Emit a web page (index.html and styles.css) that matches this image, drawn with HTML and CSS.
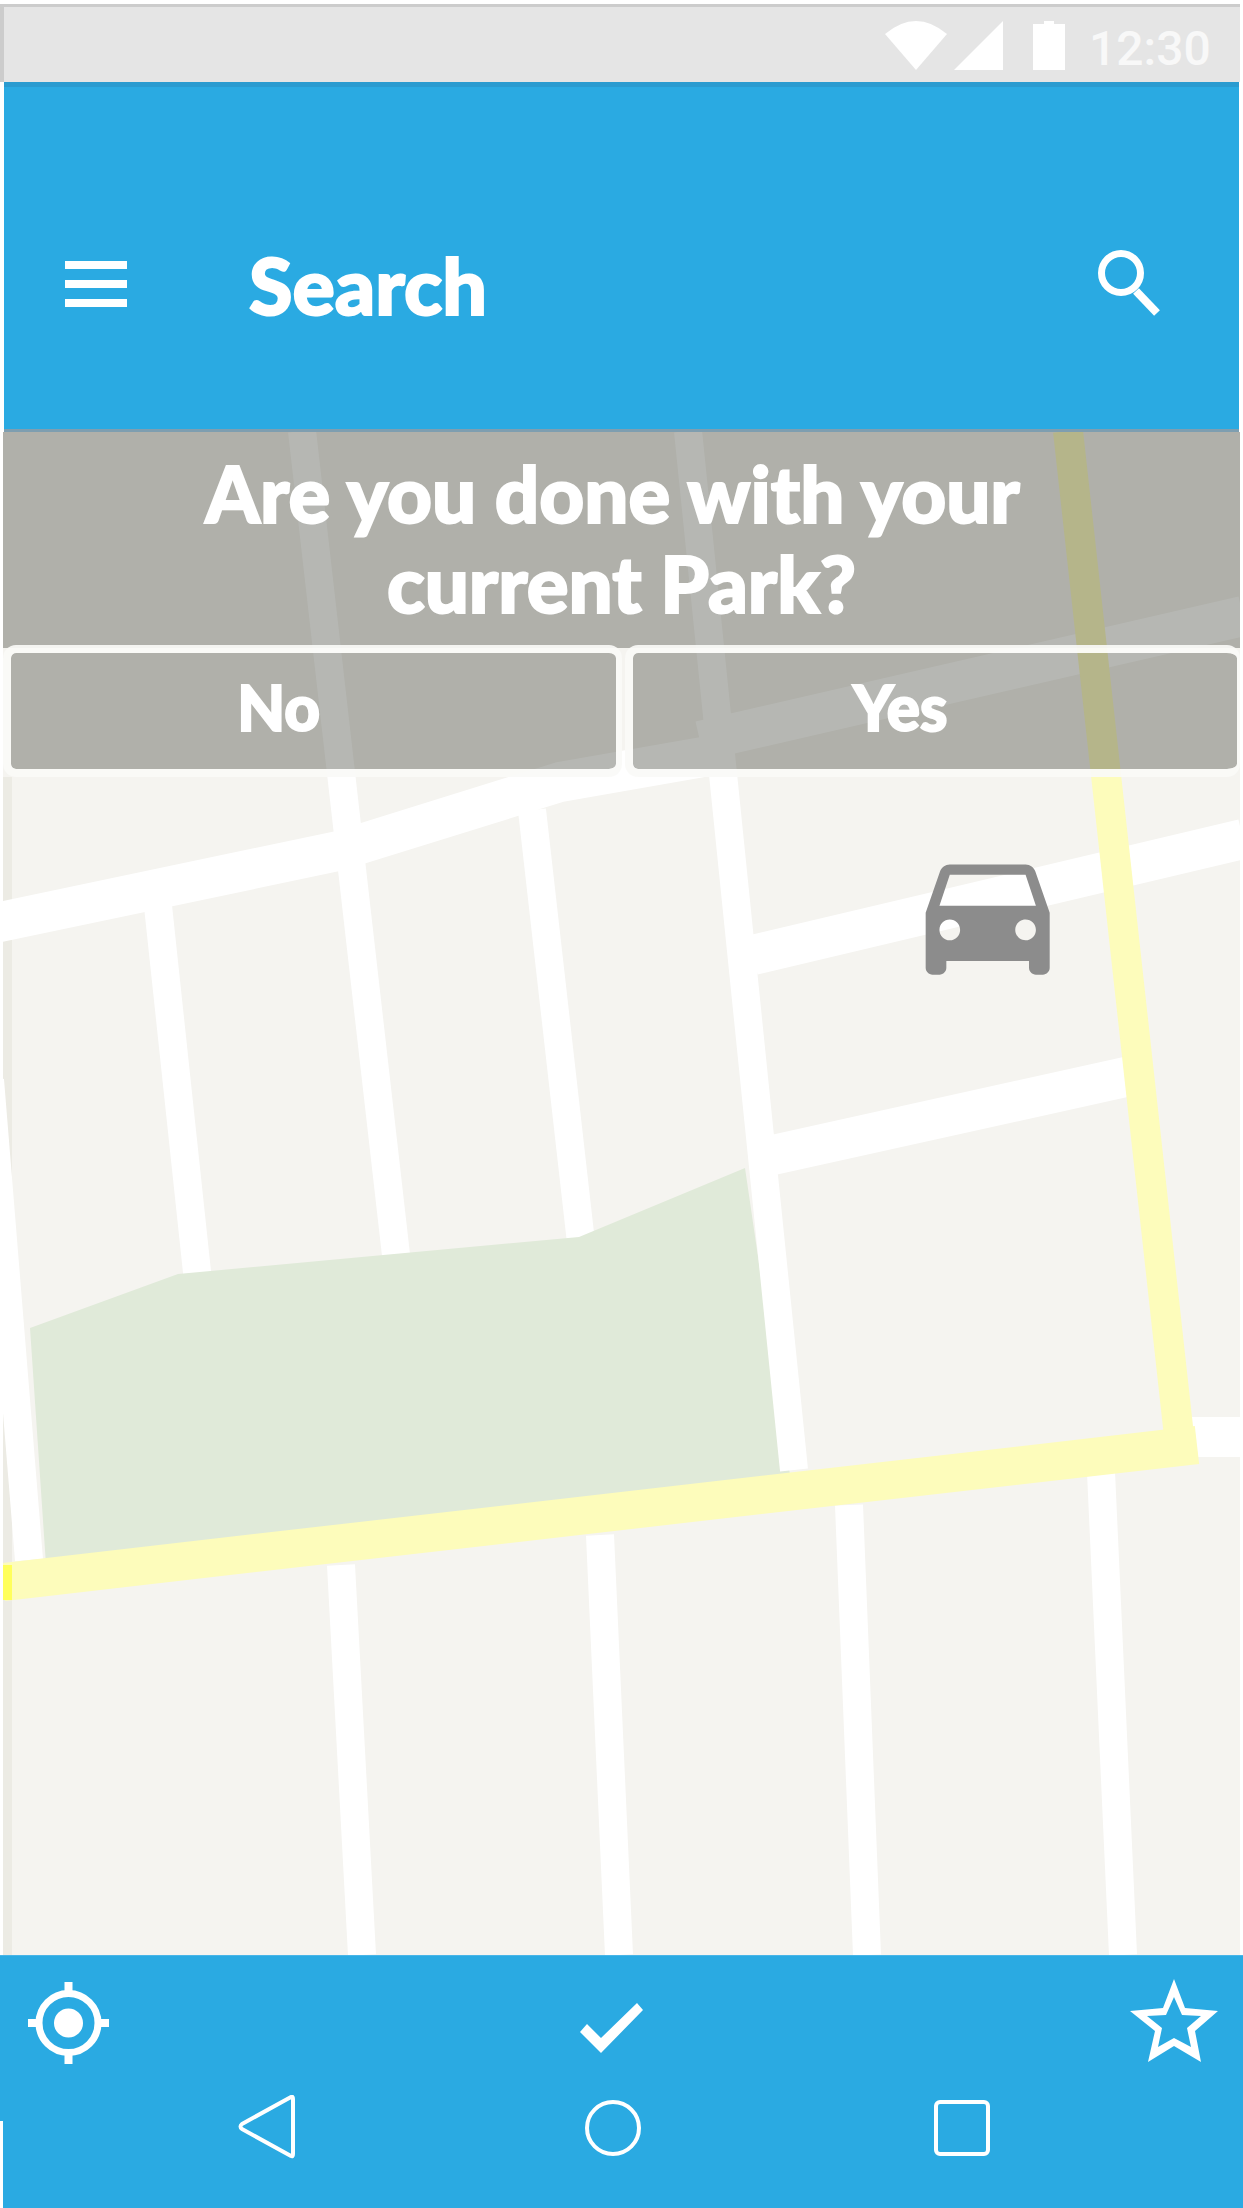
FILE: index.html
```html
<!DOCTYPE html>
<html lang="en">
<head>
<meta charset="utf-8">
<title>Search</title>
<link rel="stylesheet" href="styles.css">
</head>
<body>
<div class="screen">
  <div class="status">
    <svg class="status-icons" viewBox="885 21 180 49" width="180" height="49">
      <path class="fill-white" d="M885 34 Q916 8 947 34 L916 70 Z"/>
      <path class="fill-white" d="M954 70 L1003 21 V70 Z"/>
      <path class="fill-white" d="M1033 24 H1044 V21 H1054 V24 H1065 V70 H1033 Z"/>
    </svg>
    <span class="clock">12:30</span>
  </div>
  <header class="appbar">
    <div class="menu"><i></i><i></i><i></i></div>
    <h1 class="title">Search</h1>
    <svg class="search" viewBox="1098 248 64 70" width="64" height="70">
      <circle class="stroke-white search-ring" cx="1122" cy="273" r="19.5"/>
      <path class="stroke-white search-handle" d="M1137 291 L1158 313"/>
    </svg>
  </header>
  <main class="main">
    <svg class="map" viewBox="3 432 1237 1523" width="1237" height="1523">
      <rect class="strip" x="3" y="777" width="9" height="1178"/>
      <g class="road">
        <line x1="302" y1="431" x2="400" y2="1290"/>
        <line x1="158" y1="906" x2="200" y2="1300"/>
        <line x1="532" y1="810" x2="583" y2="1260"/>
      </g>
      <polygon class="park" points="30,1328 178,1274 579,1237 745,1168 790,1475 46,1565"/>
      <g class="road">
        <line x1="-10" y1="1080" x2="29" y2="1560"/>
        <line x1="688" y1="431" x2="794" y2="1470"/>
        <line x1="341" y1="1565" x2="362" y2="1955"/>
        <line x1="600" y1="1535" x2="619" y2="1955"/>
        <line x1="849" y1="1505" x2="867" y2="1955"/>
        <line x1="1101" y1="1472" x2="1123" y2="1955"/>
      </g>
      <g class="road-wide">
        <polyline points="-5,923 338,851 560,782 720,754"/>
        <polyline points="700,741 1243,616"/>
        <polyline points="753,955 1243,839"/>
        <polyline points="773,1155 1130,1076"/>
        <polyline points="1190,1437 1243,1437"/>
      </g>
      <g class="highway">
        <line x1="1068" y1="431" x2="1180" y2="1445"/>
        <line x1="3" y1="1582" x2="1197" y2="1445"/>
      </g>
      <rect class="stub" x="3" y="1565" width="9" height="35"/>
      <path class="car" transform="translate(905 830) scale(6.89)" d="M18.92 6.01C18.72 5.42 18.16 5 17.5 5h-11c-.66 0-1.21.42-1.42 1.01L3 12v8c0 .55.45 1 1 1h1c.55 0 1-.45 1-1v-1h12v1c0 .55.45 1 1 1h1c.55 0 1-.45 1-1v-8l-2.08-5.99zM6.5 16c-.83 0-1.5-.67-1.5-1.5S5.67 13 6.5 13s1.5.67 1.5 1.5S7.33 16 6.5 16zm11 0c-.83 0-1.5-.67-1.5-1.5s.67-1.5 1.5-1.5 1.5.67 1.5 1.5-.67 1.5-1.5 1.5zM5 11l1.5-4.5h11L19 11H5z"/>
    </svg>
    <section class="dialog">
      <h2 class="prompt"><span class="prompt-first">Are you done with your</span>current Park?</h2>
      <div class="choices">
        <button class="choice">No</button>
        <button class="choice choice-yes">Yes</button>
      </div>
    </section>
  </main>
  <footer class="bottom">
    <div class="actions">
      <svg class="locate" viewBox="28 1975 81 90" width="81" height="90">
        <circle class="stroke-white ring" cx="68.5" cy="2023" r="29.5"/>
        <circle class="fill-white" cx="68.5" cy="2023" r="14.5"/>
        <path class="stroke-white ticks" d="M68.5 1982V1994M68.5 2052V2064M28 2023H40M97 2023H109"/>
      </svg>
      <svg class="check" viewBox="580 1975 63 90" width="63" height="90">
        <polygon class="fill-white" points="580,2032 587,2024 601,2038 637,2003 643,2010 601,2053"/>
      </svg>
      <svg class="star" viewBox="1130 1975 88 90" width="88" height="90">
        <path class="fill-white" fill-rule="evenodd" d="M1174 1979L1185 2008L1218 2011L1195 2031L1201 2062L1174 2046L1148 2062L1155 2031L1130 2011L1163 2008ZM1174 1997L1166 2015L1147 2016L1162 2028L1158 2047L1174 2038L1191 2047L1187 2028L1201 2016L1182 2015Z"/>
      </svg>
    </div>
    <nav class="softkeys">
      <svg class="back" viewBox="236 2095 61 64" width="61" height="64">
        <path class="stroke-white key" d="M291 2097Q293 2096 293 2099V2154Q293 2157 291 2156L242 2129Q239 2126.5 242 2124Z"/>
      </svg>
      <svg class="home" viewBox="583 2095 60 64" width="60" height="64">
        <circle class="stroke-white key" cx="613" cy="2128" r="26"/>
      </svg>
      <svg class="recent" viewBox="932 2095 60 64" width="60" height="64">
        <rect class="stroke-white key" x="936" y="2102" width="52" height="52" rx="4"/>
      </svg>
    </nav>
  </footer>
</div>
</body>
</html>
```

FILE: styles.css
```css
* { box-sizing: border-box; }
html, body { margin: 0; padding: 0; background: #fff; }
.screen { width: 1243px; height: 2208px; display: flex; flex-direction: column; overflow: hidden; }

.status {
  margin-top: 4px; width: 1240px; height: 78px; flex: none;
  background: #e5e5e5; border-top: 3px solid #cccccc; border-left: 4px solid #cccccc;
  display: flex; align-items: flex-start; padding-top: 14px; padding-left: 881px;
  font-family: Roboto, sans-serif;
}
.status-icons { display: block; flex: none; }
.clock { margin-left: 24px; font-size: 48px; font-weight: 500; line-height: 56px; color: #f8f8f8; }
.fill-white { fill: #fff; }
.stroke-white { fill: none; stroke: #fff; }

.appbar {
  flex: none; margin-left: 4px; width: 1235px; height: 350px;
  background: #2aaae2; border-top: 5px solid #2a9bd0; border-bottom: 3px solid #7e9eb0;
  display: flex; align-items: flex-start; padding-top: 156px; padding-left: 61px; color: #fff;
}
.menu { width: 62px; display: flex; flex-direction: column; gap: 11px; margin-top: 18px; flex: none; }
.menu i { display: block; height: 8px; background: #fff; }
.title { margin: 0 0 0 122px; font: 900 79px/84px Lato, sans-serif; color: #fff; -webkit-text-stroke: 2px #fff; }
.search { margin-left: auto; margin-right: 78px; margin-top: 5px; flex: none; }
.search-ring { stroke-width: 7; }
.search-handle { stroke-width: 8; }

.main { flex: 1; position: relative; margin-left: 3px; width: 1237px; background: #f5f4f0; }
.map { position: absolute; inset: 0; display: block; }
.strip { fill: #ecebe4; }
.park { fill: #e0ead9; }
.road line { stroke: #fff; stroke-width: 28; }
.road-wide polyline { fill: none; stroke: #fff; stroke-width: 40; stroke-linejoin: round; }
.highway line { stroke: #fdfcbb; stroke-width: 38; }
.highway line:first-child { stroke-width: 30; }
.stub { fill: #ffff5c; }
.car { fill: #8c8c8c; }

.dialog { position: absolute; left: 0; right: 0; top: 0; }
.prompt {
  margin: 0; height: 216px; padding-top: 16px; text-align: center; background: rgba(72,74,66,.4);
  font: 900 78px/90px Lato, sans-serif; color: #fff; -webkit-text-stroke: 2px #fff;
}
.prompt-first { display: block; padding-right: 18px; }
.choices { display: flex; gap: 3px; margin-top: -3px; }
.choice {
  flex: 1; height: 132px; padding: 0 69px 8px 0; border: 8px solid rgba(250,250,247,.92); border-right-width: 6px; border-radius: 13px;
  background: rgba(72,74,66,.4); background-clip: padding-box;
  font: 900 62px/1 Lato, sans-serif; color: #fff; -webkit-text-stroke: 2px #fff;
}
.choice-yes { border-right-width: 3px; }

.bottom { flex: none; height: 253px; width: 1243px; background: #2aaae2; border-top: 1px solid #48b5e8; position: relative; }
.bottom::after { content: ""; position: absolute; left: 0; bottom: 0; width: 3px; height: 87px; background: #fff; }
.actions { display: flex; padding: 19px 25px 0 28px; height: 109px; }
.actions svg, .softkeys svg { display: block; flex: none; }
.check { margin-left: 471px; }
.star { margin-left: auto; }
.softkeys { display: flex; padding: 30px 0 0 236px; }
.home { margin-left: 286px; }
.recent { margin-left: 289px; }
.ring { stroke-width: 7; }
.ticks { stroke-width: 8; }
.key { stroke-width: 4; stroke-linejoin: round; }
```
